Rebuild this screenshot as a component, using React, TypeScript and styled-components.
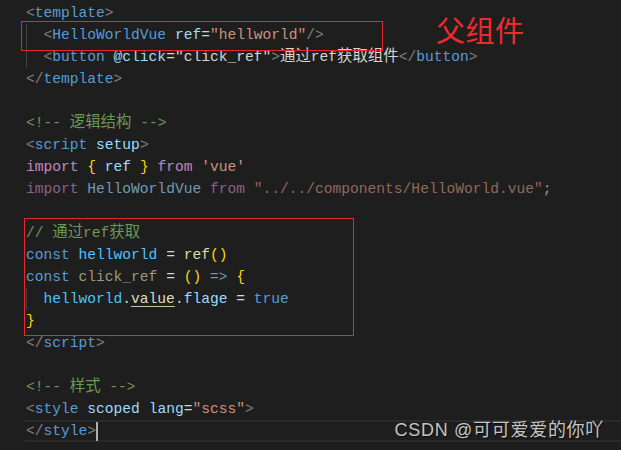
import React from "react";
import styled, { createGlobalStyle } from "styled-components";

const Global = createGlobalStyle`
  html, body { margin: 0; padding: 0; background: #1e1e1e; }
  #root { width: 621px; height: 450px; overflow: hidden; }
`;

const C = {
  punc: "#808080",
  tag: "#569cd6",
  attr: "#9cdcfe",
  str: "#ce9178",
  text: "#d4d4d4",
  comment: "#6a9955",
  kw: "#c586c0",
  gold: "#ffd700",
  con: "#4fc1ff",
  fn: "#dcdcaa",
  faint: "#9a9a7c",
};

const Editor = styled.div`
  position: relative;
  width: 621px;
  height: 450px;
  background: #1e1e1e;
  padding: 2px 0 0 26px;
  box-sizing: border-box;
  font-family: "Liberation Mono", "Noto Sans CJK SC", monospace;
  font-size: 14.6px;
`;

const Line = styled.div<{ $current?: boolean }>`
  display: block;
  height: 22px;
  line-height: 22px;
  white-space: pre;
  box-sizing: border-box;
  ${(p) =>
    p.$current &&
    `
    margin-left: -1px;
    padding-left: 1px;
    border-top: 2px solid #2a2a2a;
    border-bottom: 2px solid #2a2a2a;
    line-height: 18px;
  `}
`;

const Indent = styled.span`
  display: inline-block;
  width: 17.5px;
  height: 22px;
  vertical-align: top;
  box-sizing: border-box;
  border-left: 1px solid #404040;
`;

const Tok = styled.span<{ $c: string; $dim?: boolean; $u?: boolean }>`
  color: ${(p) => p.$c};
  opacity: ${(p) => (p.$dim ? 0.65 : 1)};
  ${(p) => p.$u && `text-decoration: underline; text-decoration-color: #c8c4a0; text-underline-offset: 3px;`}
`;

const Cjk = styled.span<{ $c: string }>`
  color: ${(p) => p.$c};
  font-family: "Noto Sans CJK SC", sans-serif;
  font-size: 15.4px;
  line-height: 1;
  vertical-align: baseline;
`;

const Cursor = styled.span`
  display: inline-block;
  width: 2px;
  height: 19px;
  vertical-align: top;
  background: #aeafad;
`;

const RedBox = styled.div<{ $l: number; $t: number; $w: number; $h: number }>`
  position: absolute;
  left: ${(p) => p.$l}px;
  top: ${(p) => p.$t}px;
  width: ${(p) => p.$w}px;
  height: ${(p) => p.$h}px;
  border: 1px solid #e8262c;
  box-sizing: border-box;
  pointer-events: none;
`;

const Note = styled.div`
  position: absolute;
  left: 436px;
  top: 15px;
  color: #ee2a2e;
  font-family: "Noto Sans CJK SC", sans-serif;
  font-size: 29px;
  line-height: 28px;
  letter-spacing: 0.5px;
`;

const Watermark = styled.div`
  position: absolute;
  right: 17px;
  top: 418px;
  color: #c4c4c4;
  font-family: "Liberation Sans", "Noto Sans CJK SC", sans-serif;
  font-size: 18px;
  letter-spacing: 0.7px;
  line-height: 24px;
  text-shadow: 1px 1px 1px rgba(0, 0, 0, 0.6);
`;

const T = (c: string, s: string, dim?: boolean) => (
  <Tok $c={c} $dim={dim}>
    {s}
  </Tok>
);

export default function App() {
  return (
    <>
      <Global />
      <Editor>
        <Line>
          {T(C.punc, "<")}
          {T(C.tag, "template")}
          {T(C.punc, ">")}
        </Line>
        <Line>
          <Indent />
          {T(C.punc, "<")}
          {T(C.tag, "HelloWorldVue")}
          {T(C.text, " ")}
          {T(C.attr, "ref")}
          {T(C.text, "=")}
          {T(C.str, '"hellworld"')}
          {T(C.punc, "/>")}
        </Line>
        <Line>
          <Indent />
          {T(C.punc, "<")}
          {T(C.tag, "button")}
          {T(C.text, " ")}
          {T(C.attr, "@click")}
          {T(C.text, "=")}
          {T(C.text, '"click_ref"')}
          {T(C.punc, ">")}
          <Cjk $c={C.text}>通过</Cjk>
          {T(C.text, "ref")}
          <Cjk $c={C.text}>获取组件</Cjk>
          {T(C.punc, "</")}
          {T(C.tag, "button")}
          {T(C.punc, ">")}
        </Line>
        <Line>
          {T(C.punc, "</")}
          {T(C.tag, "template")}
          {T(C.punc, ">")}
        </Line>
        <Line />
        <Line>
          {T(C.comment, "<!-- ")}
          <Cjk $c={C.comment}>逻辑结构</Cjk>
          {T(C.comment, " -->")}
        </Line>
        <Line>
          {T(C.punc, "<")}
          {T(C.tag, "script")}
          {T(C.text, " ")}
          {T(C.attr, "setup")}
          {T(C.punc, ">")}
        </Line>
        <Line>
          {T(C.kw, "import")}
          {T(C.text, " ")}
          {T(C.gold, "{")}
          {T(C.attr, " ref ")}
          {T(C.gold, "}")}
          {T(C.text, " ")}
          {T(C.kw, "from")}
          {T(C.text, " ")}
          {T(C.str, "'vue'")}
        </Line>
        <Line>
          {T(C.kw, "import", true)}
          {T(C.text, " ")}
          {T(C.attr, "HelloWorldVue", true)}
          {T(C.text, " ")}
          {T(C.kw, "from", true)}
          {T(C.text, " ")}
          {T(C.str, '"../../components/HelloWorld.vue"', true)}
          {T(C.text, ";", true)}
        </Line>
        <Line />
        <Line>
          {T(C.comment, "// ")}
          <Cjk $c={C.comment}>通过</Cjk>
          {T(C.comment, "ref")}
          <Cjk $c={C.comment}>获取</Cjk>
        </Line>
        <Line>
          {T(C.tag, "const")}
          {T(C.text, " ")}
          {T(C.con, "hellworld")}
          {T(C.text, " = ")}
          {T(C.fn, "ref")}
          {T(C.gold, "()")}
        </Line>
        <Line>
          {T(C.tag, "const")}
          {T(C.text, " ")}
          {T(C.faint, "click_ref")}
          {T(C.text, " = ")}
          {T(C.gold, "()")}
          {T(C.text, " ")}
          {T(C.tag, "=>")}
          {T(C.text, " ")}
          {T(C.gold, "{")}
        </Line>
        <Line>
          <Indent />
          {T(C.con, "hellworld")}
          {T(C.text, ".")}
          <Tok $c="#dedbc4" $u>
            value
          </Tok>
          {T(C.text, ".")}
          {T(C.attr, "flage")}
          {T(C.text, " = ")}
          {T(C.tag, "true")}
        </Line>
        <Line>{T(C.gold, "}")}</Line>
        <Line>
          {T(C.punc, "</")}
          {T(C.tag, "script")}
          {T(C.punc, ">")}
        </Line>
        <Line />
        <Line>
          {T(C.comment, "<!-- ")}
          <Cjk $c={C.comment}>样式</Cjk>
          {T(C.comment, " -->")}
        </Line>
        <Line>
          {T(C.punc, "<")}
          {T(C.tag, "style")}
          {T(C.text, " ")}
          {T(C.attr, "scoped")}
          {T(C.text, " ")}
          {T(C.attr, "lang")}
          {T(C.text, "=")}
          {T(C.str, '"scss"')}
          {T(C.punc, ">")}
        </Line>
        <Line $current>
          {T(C.punc, "</")}
          {T(C.tag, "style")}
          {T(C.punc, ">")}
          <Cursor />
        </Line>

        <RedBox $l={21} $t={21} $w={362} $h={30} />
        <RedBox $l={24} $t={218} $w={330} $h={118} />
        <Note>父组件</Note>
        <Watermark>CSDN @可可爱爱的你吖</Watermark>
      </Editor>
    </>
  );
}
